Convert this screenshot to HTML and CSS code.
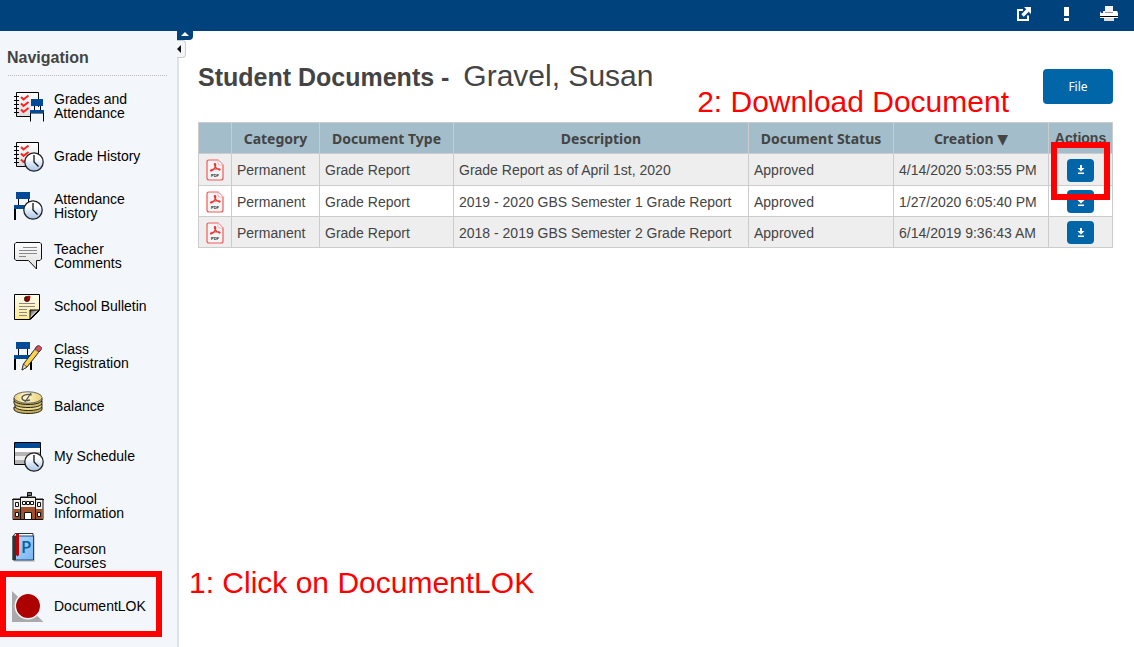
FILE: index.html
```html
<!DOCTYPE html>
<html lang="en">

<head>
	<meta charset="utf-8">
	<title>Student Documents</title>
	<link rel="stylesheet" href="styles.css">
</head>

<body>
	<!-- shared icon parts -->
	<svg class="defs" aria-hidden="true">
		<defs>
			<linearGradient id="face" x1="0" y1="0" x2="0" y2="1">
				<stop offset="0.3" stop-color="#ffffff"/><stop offset="1" stop-color="#a5c3e6"/>
			</linearGradient>
			<linearGradient id="grey" x1="0" y1="0" x2="0" y2="1">
				<stop offset="0" stop-color="#ffffff"/><stop offset="1" stop-color="#dddddd"/>
			</linearGradient>
			<linearGradient id="note" x1="0" y1="0" x2="0" y2="1">
				<stop offset="0" stop-color="#fffdf0"/><stop offset="1" stop-color="#ffe98f"/>
			</linearGradient>
			<linearGradient id="fold" x1="0" y1="0" x2="1" y2="1">
				<stop offset="0" stop-color="#444444"/><stop offset="0.6" stop-color="#eeeeee"/>
			</linearGradient>
			<linearGradient id="gold" x1="0" y1="0" x2="1" y2="0">
				<stop offset="0" stop-color="#e8cf70"/><stop offset="0.4" stop-color="#fff6cc"/><stop offset="1" stop-color="#e8d075"/>
			</linearGradient>
			<linearGradient id="cover" x1="0" y1="0" x2="1" y2="1">
				<stop offset="0" stop-color="#b5dcff"/><stop offset="1" stop-color="#79b4f0"/>
			</linearGradient>
			<symbol id="clock" viewBox="0 0 20 20">
				<circle cx="10" cy="10" r="9.2" fill="url(#face)" stroke="#222" stroke-width="1.3"/>
				<path d="M10 3v7l4.500 4.500" fill="none" stroke="#111" stroke-width="1.3"/>
			</symbol>
			<symbol id="notebook" viewBox="0 0 32 32">
				<path d="M4.500 2.500h22v24h-22z" fill="url(#grey)" stroke="#000"/>
				<path d="M2 6.500h5M2 10.500h5M2 14.500h5M2 18.500h5M2 22.500h5" stroke="#000"/>
				<path d="M9 7l2.500 2.500 5-4M9 13.500l2.500 2.500 5-4M9 19.500l2.500 2.500 5-4" fill="none" stroke="#ff2020" stroke-width="2"/>
			</symbol>
			<symbol id="pdf" viewBox="0 0 18 22">
				<path d="M3 1h9l5 5v13q0 2-2 2H3q-2 0-2-2V3q0-2 2-2z" fill="#f6f4f4" stroke="#f25a5a" stroke-width="1.200"/>
				<path d="M12 1v3q0 2 2 2h3" fill="#fff" stroke="#f9a0a0" stroke-width="0.800"/>
				<path d="M8.800 4.500q1.600 0 0.400 3.500-1.200 3-4 4-1 0-0.600-0.800 1.800-1.700 8.400-1.400 1.800 0.600 0.600 1.300-2.400-0.300-4.500-3.600-1.300-2.500-0.300-3z" fill="none" stroke="#ee3333" stroke-width="1.200"/>
				<text x="9" y="18" text-anchor="middle" font-family="Liberation Sans, sans-serif" font-weight="bold" font-size="4" fill="#222">PDF</text>
			</symbol>
			<symbol id="down" viewBox="0 0 8 10">
				<path d="M3 0h2v3h2.500L4 6.500 0.500 3H3zM1 7.500h6V9H1z" fill="#fff"/>
			</symbol>
		</defs>
	</svg>

	<header class="topbar">
		<button type="button" aria-label="Open in new window">
			<svg width="16" height="16" viewBox="0 0 16 16"><path d="M7 4H2v10h10V9.500" fill="none" stroke="#fff" stroke-width="2"/><path d="M8 1h7v7l-2.300-2.300-5 5-2.400-2.400 5-5z" fill="#fff"/></svg>
		</button>
		<button type="button" aria-label="Alerts">
			<svg width="12" height="16" viewBox="0 0 12 16"><path d="M4 1h5v9H4zM4 12h5v3H4z" fill="#fff"/></svg>
		</button>
		<button type="button" aria-label="Print">
			<svg width="18" height="16" viewBox="0 0 18 16"><path d="M5 0h8v7H5z" fill="#f4f4f4"/><path d="M1 5h4v2h8V5h4l1 2v5H0V7z" fill="#fff"/><path d="M5 6.500h8" stroke="#999"/><path d="M0 10.500h18" stroke="#000"/><path d="M4 12h10v3H4z" fill="#ddd"/><path d="M1 5h2v2H1z" fill="#22f"/></svg>
		</button>
	</header>

	<div class="page">
		<nav class="sidebar">
			<h2>Navigation</h2>
			<ul>
				<li><a href="#">
					<svg viewBox="0 0 32 32"><use href="#notebook" width="32" height="32"/><path d="M18 17h14v15H18z" fill="#f3f7fb"/><path d="M22.500 15v5M28.500 15v5" stroke="#000"/><path d="M19 9h12v7H19z" fill="#004b98"/><path d="M18.500 31.500v-8.500h13v8.500" fill="none" stroke="#000"/><path d="M18 20h14v3H18z" fill="#004b98"/></svg>
					<span>Grades and Attendance</span></a></li>
				<li><a href="#">
					<svg viewBox="0 0 32 32"><use href="#notebook" width="32" height="32"/><use href="#clock" x="12" y="12" width="20" height="20"/></svg>
					<span>Grade History</span></a></li>
				<li><a href="#">
					<svg viewBox="0 0 32 32"><path d="M6.500 8v8M16.500 8v8" stroke="#000"/><path d="M4 2h14v7H4zM2 15h16v4H2z" fill="#004b98"/><path d="M3 19v11" stroke="#000" stroke-width="2"/><use href="#clock" x="11" y="10" width="20" height="20"/></svg>
					<span>Attendance History</span></a></li>
				<li><a href="#">
					<svg viewBox="0 0 32 32"><path d="M4 2.500h24l1.500 1.500v15l-1.500 1.500h-3.500v8.500l-8-8.500H4L2.500 19V4z" fill="url(#grey)" stroke="#111"/><path d="M11 7.500h14M7 10.500h18M7 13.500h18M7 16.500h7" stroke="#888"/></svg>
					<span>Teacher Comments</span></a></li>
				<li><a href="#">
					<svg viewBox="0 0 32 32"><path d="M2.500 4.500h25v16l-9 9h-16z" fill="url(#note)" stroke="#000"/><path d="M18 20h9l-9 9z" fill="url(#fold)" stroke="#000"/><path d="M7 13.500h16M7 16.500h16M7 19.500h8M7 22.500h8M7 25.500h8" stroke="#888"/><circle cx="15" cy="9" r="2.700" fill="#8b0000" stroke="#222" stroke-width="0.700"/><circle cx="17" cy="7" r="1.500" fill="#b00"/></svg>
					<span>School Bulletin</span></a></li>
				<li><a href="#">
					<svg viewBox="0 0 32 32"><path d="M6.500 8v8M15.500 8v8" stroke="#000"/><path d="M4 2h14v7H4zM2 15h17v4H2z" fill="#004b98"/><path d="M3 19v11M19 19v11" stroke="#000" stroke-width="2"/><path d="M10 30l1.500-6L24.500 7l4 3L15 27z" fill="#fbd34a" stroke="#222"/><path d="M10 30l1.500-6 3.500 3z" fill="#ead9b8" stroke="#222" stroke-width="0.700"/><path d="M23 9l2-3 2-0.500 2.500 2V9l-2.500 3z" fill="#d9505a" stroke="#222" stroke-width="0.700"/><path d="M22.500 9.500l4 3" stroke="#999"/></svg>
					<span>Class Registration</span></a></li>
				<li><a href="#">
					<svg viewBox="0 0 32 32"><path d="M2 17v2c0 6 28 6 28 0V17z" fill="#c8ae50" stroke="#222"/><path d="M3 14v2c0 6 27 6 27 0v-2z" fill="#eedc8d" stroke="#222"/><path d="M2 11v2c0 6 28 6 28 0v-2z" fill="#d8c062" stroke="#222"/><path d="M2 8v2c0 6 28 6 28 0V8z" fill="#bfa548" stroke="#222"/><ellipse cx="16" cy="7.500" rx="14" ry="5.700" fill="url(#gold)" stroke="#666"/><path d="M20 5c-5-1.500-10 0-10 3s4 3 8 2M19 3l-6 9" fill="none" stroke="#555" stroke-width="1.300"/></svg>
					<span>Balance</span></a></li>
				<li><a href="#">
					<svg viewBox="0 0 32 32"><path d="M2.500 2.500h26v22h-26z" fill="#fff" stroke="#000"/><path d="M3 3h25v5H3z" fill="#004b98"/><path d="M3 12h25v4H3zM3 20h25v4H3z" fill="#b5b5b5"/><path d="M3 16h25v4H3z" fill="#eee"/><use href="#clock" x="12" y="12" width="20" height="20"/></svg>
					<span>My Schedule</span></a></li>
				<li><a href="#">
					<svg viewBox="0 0 32 32"><path d="M15.500 7V2.500h4v3h-4" fill="#777" stroke="#111"/><path d="M1 9h7.500V7h15v2H31v20.500H1z" fill="#f2efed" stroke="#111"/><path d="M1.500 19h7v-2h15v2h7v10h-29z" fill="#a0522d"/><path d="M8.500 7v22.500M23.500 7v22.500M0 9.500h8.500M23.500 9.500H32M8 7.500h16" stroke="#111"/><path d="M3.500 12.500h3v4h-3zM25.500 12.500h3v4h-3zM10.500 11.500h3v3h-3zM18.500 11.500h3v3h-3zM14.500 11.500h3v3h-3zM3.500 22.500h3v4h-3zM25.500 22.500h3v4h-3zM12.500 22.500h7v7h-7z" fill="#fff" stroke="#111"/></svg>
					<span>School Information</span></a></li>
				<li class="raised"><a href="#">
					<svg viewBox="0 0 32 32"><path d="M2 3h21v27H2z" fill="#999" opacity="0.400"/><path d="M3 1.500h18v3H1z" fill="#fff" stroke="#333"/><path d="M1 4h20.500v24H1z" fill="url(#cover)" stroke="#1c4670"/><path d="M0.500 4H4v24H0.500z" fill="#333"/><path d="M4 2h3v21l-1.500 1.500L4 23z" fill="#c00000"/><text x="9" y="21" font-family="Open Sans, sans-serif" font-size="17" font-weight="600" fill="#06629f">P</text></svg>
					<span>Pearson Courses</span></a></li>
				<li class="marked"><a href="#">
					<svg viewBox="0 0 32 32"><path d="M0 1l31.500 31H0z" fill="#aaa"/><circle cx="16" cy="16" r="12.700" fill="#ad0000" stroke="#f3f7fb" stroke-width="1.500"/></svg>
					<span>DocumentLOK</span></a></li>
			</ul>
			<button type="button" class="tab tab-up" aria-label="Hide header"><svg width="8" height="4" viewBox="0 0 8 4"><path d="M0 4l4-4 4 4z" fill="#fff"/></svg></button>
			<button type="button" class="tab tab-left" aria-label="Hide navigation"><svg width="4" height="8" viewBox="0 0 4 8"><path d="M4 0v8L0 4z" fill="#111"/></svg></button>
			<p class="note step1">1: Click on DocumentLOK</p>
		</nav>

		<main>
			<div class="heading">
				<h1>Student Documents - <span>Gravel, Susan</span></h1>
				<button type="button" class="file">File</button>
				<p class="note step2">2: Download Document</p>
			</div>

			<table>
				<thead>
					<tr>
						<th class="c-icon"></th>
						<th class="c-category">Category</th>
						<th class="c-type">Document Type</th>
						<th>Description</th>
						<th class="c-status">Document Status</th>
						<th class="c-created">Creation <span class="sort">▼</span></th>
						<th class="c-actions">Actions</th>
					</tr>
				</thead>
				<tbody>
					<tr>
						<td><svg class="pdf"><use href="#pdf"/></svg></td>
						<td>Permanent</td>
						<td>Grade Report</td>
						<td>Grade Report as of April 1st, 2020</td>
						<td>Approved</td>
						<td>4/14/2020 5:03:55 PM</td>
						<td class="marked"><button type="button" class="download" aria-label="Download"><svg><use href="#down"/></svg></button></td>
					</tr>
					<tr>
						<td><svg class="pdf"><use href="#pdf"/></svg></td>
						<td>Permanent</td>
						<td>Grade Report</td>
						<td>2019 - 2020 GBS Semester 1 Grade Report</td>
						<td>Approved</td>
						<td>1/27/2020 6:05:40 PM</td>
						<td><button type="button" class="download" aria-label="Download"><svg><use href="#down"/></svg></button></td>
					</tr>
					<tr>
						<td><svg class="pdf"><use href="#pdf"/></svg></td>
						<td>Permanent</td>
						<td>Grade Report</td>
						<td>2018 - 2019 GBS Semester 2 Grade Report</td>
						<td>Approved</td>
						<td>6/14/2019 9:36:43 AM</td>
						<td><button type="button" class="download" aria-label="Download"><svg><use href="#down"/></svg></button></td>
					</tr>
				</tbody>
			</table>
		</main>
	</div>
</body>
</html>
```

FILE: styles.css
```css
* {
	box-sizing: border-box;
}

body {
	margin: 0;
	min-height: 100vh;
	display: flex;
	flex-direction: column;
	background-color: #ffffff;
	color: #444444;
	font-family: "Liberation Sans", Arial, sans-serif;
	font-size: 14px;
}

h1, h2, p, ul {
	margin: 0;
	padding: 0;
}

button {
	border: 0;
	padding: 0;
	cursor: pointer;
}

svg {
	display: block;
}

.defs {
	position: absolute;
	width: 0;
	height: 0;
}

/* top bar */
.topbar {
	display: flex;
	justify-content: flex-end;
	align-items: center;
	gap: 28px;
	height: 31px;
	padding: 0 16px 3px;
	background-color: #00427c;
}

.topbar button {
	background: none;
}

.page {
	display: flex;
	flex: 1;
}

/* navigation */
.sidebar {
	position: relative;
	flex: none;
	width: 179px;
	padding-bottom: 14px;
	border-right: 2px solid #dde3e8;
	background-color: #f3f7fb;
}

.sidebar h2 {
	margin: 0 10px 5px 8px;
	padding: 18px 0 8px;
	border-bottom: 1px dotted #bbbbbb;
	font-size: 16px;
	line-height: 18px;
	text-indent: -1px;
}

.sidebar ul {
	list-style: none;
}

.sidebar li {
	position: relative;
}

.sidebar a {
	display: flex;
	align-items: center;
	gap: 10px;
	height: 50px;
	padding: 0 24px 0 12px;
	color: #000000;
	line-height: 14px;
	text-decoration: none;
}

.sidebar a svg {
	flex: none;
	width: 32px;
	height: 32px;
}

.raised a svg {
	margin-bottom: 16px;
}

.tab {
	position: absolute;
	left: 177px;
	display: flex;
	align-items: center;
	justify-content: center;
}

.tab-up {
	top: 0;
	width: 16px;
	height: 9px;
	padding-bottom: 3px;
	border-radius: 0 0 4px 0;
	background-color: #00427c;
}

.tab-left {
	top: 9px;
	width: 9px;
	height: 18px;
	padding-right: 4px;
	border: 1px solid #cccccc;
	border-left: 0;
	border-radius: 0 4px 4px 0;
	background-color: #f3f7fb;
}

/* red walkthrough marks */
.note {
	position: absolute;
	color: #ff0000;
	font-size: 30px;
	line-height: 34px;
	white-space: nowrap;
}

.step1 {
	left: 189px;
	bottom: 47px;
}

.step2 {
	top: 54px;
	right: 104px;
}

.marked::after {
	content: "";
	position: absolute;
	border: 6px solid #ff0000;
	pointer-events: none;
}

li.marked::after {
	inset: -10px 15px -6px 0;
}

/* content */
main {
	flex: 1;
	min-width: 0;
	padding: 0 21px 0 19px;
}

.heading {
	position: relative;
	display: flex;
	justify-content: space-between;
	height: 91px;
}

.heading h1 {
	padding-top: 28px;
	font-size: 25px;
	line-height: 34px;
}

.heading h1 span {
	margin-left: 7px;
	font-size: 30px;
	font-weight: normal;
}

.file {
	width: 70px;
	height: 35px;
	margin-top: 38px;
	border-radius: 4px;
	background-color: #0066a8;
	color: #ffffff;
	font-family: "Noto Sans", Tahoma, sans-serif;
	font-size: 12px;
}

table {
	width: 100%;
	border-collapse: collapse;
	table-layout: fixed;
}

th, td {
	height: 31px;
	padding: 0 5px;
	border: 1px solid #cccccc;
	white-space: nowrap;
}

th {
	padding: 0;
	background-color: #a3bdca;
	font-family: "Noto Sans", Tahoma, sans-serif;
}

td {
	padding-top: 1px;
	text-align: left;
}

tbody tr:first-child td {
	height: 32px;
}

tbody tr:nth-child(odd) {
	background-color: #eeeeee;
}

.c-icon {
	width: 33px;
}

.c-category {
	width: 88px;
}

.c-type {
	width: 134px;
}

.c-status {
	width: 145px;
}

.c-created {
	width: 155px;
}

.c-actions {
	width: 64px;
	font-family: "Liberation Sans", Arial, sans-serif;
}

.sort {
	font-family: "DejaVu Sans", sans-serif;
	line-height: 16px;
}

.pdf {
	width: 18px;
	height: 22px;
	margin-left: 2px;
}

td.marked {
	position: relative;
}

td.marked::after {
	inset: -12px 2px -15px 2px;
}

.download {
	display: flex;
	align-items: center;
	justify-content: center;
	width: 27px;
	height: 23px;
	margin: 0 auto;
	border-radius: 4px;
	background-color: #0066a8;
}

.download svg {
	width: 8px;
	height: 10px;
}
```
